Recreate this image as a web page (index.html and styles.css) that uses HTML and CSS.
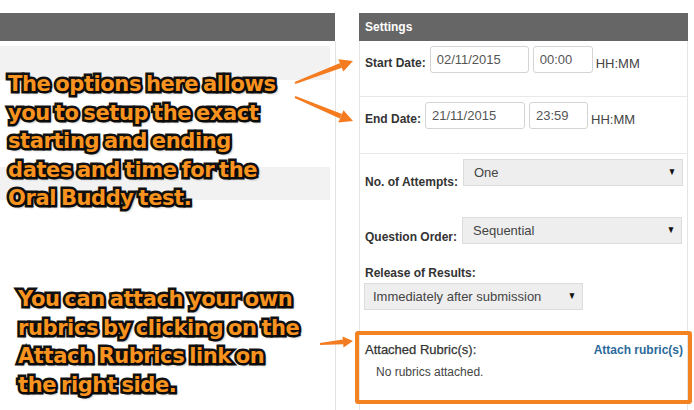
FILE: index.html
```html
<!DOCTYPE html>
<html>
<head>
<meta charset="utf-8">
<link rel="stylesheet" href="styles.css">
</head>
<body>
<div class="page">
  <div class="left">
    <div class="left-head"></div>
    <div class="left-body">
      <div class="band band-a"></div>
      <div class="band band-b"></div>
    </div>
  </div>
  <div class="right">
    <div class="head">Settings</div>
    <div class="row row-start">
      <span class="lbl">Start Date:</span>
      <span class="inp date">02/11/2015</span>
      <span class="inp time">00:00</span>
      <span class="unit">HH:MM</span>
    </div>
    <div class="row row-end">
      <span class="lbl">End Date:</span>
      <span class="inp date">21/11/2015</span>
      <span class="inp time">23:59</span>
      <span class="unit">HH:MM</span>
    </div>
    <div class="opts">
      <div class="opt opt-attempts">
        <span class="lbl">No. of Attempts:</span>
        <span class="sel wide">One<i class="caret">&#9660;</i></span>
      </div>
      <div class="opt opt-order">
        <span class="lbl">Question Order:</span>
        <span class="sel wide">Sequential<i class="caret">&#9660;</i></span>
      </div>
      <div class="opt-release">
        <div class="lbl">Release of Results:</div>
        <span class="sel release">Immediately after submission<i class="caret">&#9660;</i></span>
      </div>
    </div>
    <div class="rubric">
      <div class="rubric-top">
        <span class="lbl">Attached Rubric(s):</span>
        <a class="attach">Attach rubric(s)</a>
      </div>
      <div class="none">No rubrics attached.</div>
    </div>
  </div>

  <div class="note note-1">The options here allows<br>you to setup the exact<br>starting and ending<br>dates and time for the<br>Oral Buddy test.</div>
  <div class="note note-2">You can attach your own<br>rubrics by clicking on the<br>Attach Rubrics link on<br>the right side.</div>

  <svg class="arrows" width="694" height="410" viewBox="0 0 694 410">
    <g fill="#f47b20">
      <polygon points="295.4,84 294.6,82 340.1,62.9 341.9,67.7"/>
      <polygon points="353,61 343.3,71.4 338.3,59.2"/>
      <polygon points="294.6,98 295.4,96 342,114 339.8,118.6"/>
      <polygon points="353,121 338.3,122.4 343.5,110.2"/>
      <polygon points="320.1,345 319.9,343 342.8,339.6 343.2,344.2"/>
      <polygon points="353,341 343.5,347.4 342.5,336.4"/>
    </g>
  </svg>
</div>
</body>
</html>
```
FILE: styles.css
```css
* { box-sizing: border-box; }
html, body { margin: 0; padding: 0; background: #fff; }
body { font-family: "Liberation Sans", Arial, sans-serif; color: #333; }

.page {
  position: relative;
  width: 694px;
  height: 410px;
  overflow: hidden;
  display: flex;
  align-items: flex-start;
}

/* left column */
.left { width: 336px; padding-top: 13px; flex: none; }
.left-head { height: 28px; background: #666; margin-right: 1px; }
.left-body {
  height: 369px;
  border-right: 1px solid #e3e3e3;
  padding: 5px 5px 0 0;
  display: flex;
  flex-direction: column;
}
.band { background: #f2f2f2; }
.band-a { height: 34px; }
.band-b { height: 33px; margin-top: 87px; }

/* right column */
.right {
  width: 329px;
  margin-left: 23px;
  margin-top: 13px;
  flex: none;
  border-left: 1px solid #e5e5e5;
  border-right: 1px solid #e5e5e5;
  height: 397px;
}
.head {
  height: 28px;
  background: #666;
  color: #fff;
  font-weight: bold;
  font-size: 12px;
  line-height: 28px;
  padding-left: 6px;
  margin: 0 -1px;
}
.lbl { font-weight: bold; font-size: 12px; color: #333; }

.row {
  display: flex;
  align-items: flex-start;
  padding-left: 5px;
  border-bottom: 1px solid #e8e8e8;
}
.row-start { height: 56px; padding-top: 5px; }
.row-end { height: 57px; padding-top: 5px; }
.row .lbl { margin-top: 10px; margin-right: 4px; }
.inp {
  height: 27px;
  border: 1px solid #d4d4d4;
  border-radius: 3px;
  font-size: 13px;
  color: #555;
  padding: 5px 0 0 6px;
  margin-right: 4px;
  background: #fff;
}
.row-start .date { width: 99px; }
.row-end .date { width: 100px; }
.row-start .time { width: 60px; }
.row-end .time { width: 59px; }
.unit { font-size: 13px; color: #444; margin-top: 10px; margin-left: -1px; }

.opts { padding-left: 5px; }
.opt { display: flex; align-items: flex-start; }
.opt .lbl { margin-right: 5px; }
.opt-attempts { padding-top: 5px; }
.opt-attempts .lbl { margin-top: 16px; }
.opt-order { padding-top: 30px; }
.opt-order .lbl { margin-top: 11px; }
.sel {
  position: relative;
  display: block;
  height: 27px;
  background: #eee;
  border: 1px solid #dcdcdc;
  font-size: 13px;
  color: #444;
  padding: 5px 0 0 10px;
}
.sel.wide { width: 220px; }
.opt-order .sel { margin-top: -2px; }
.caret {
  position: absolute;
  right: 5px;
  top: 6px;
  font-style: normal;
  font-size: 10px;
  color: #111;
  transform: scaleX(0.85);
}
.opt-release { padding-top: 21px; }
.opt-release .lbl { height: 16px; line-height: 16px; }
.sel.release { width: 219px; margin-top: 2px; margin-left: -1px; padding-left: 8px; }

.rubric {
  margin: 21px -5px 0 -5px;
  height: 73px;
  border: 4px solid #f58220;
  border-radius: 3px;
  padding: 7px 5px 0 6px;
}
.rubric-top { display: flex; justify-content: space-between; align-items: center; }
.rubric-top .lbl { font-weight: normal; font-size: 13px; color: #333; -webkit-text-stroke: 0.25px #333; }
.attach { color: #2b6a9a; font-weight: bold; font-size: 12px; }
.none { font-size: 12px; color: #444; padding: 8px 0 0 11px; }

/* annotations (callouts over the page) */
.note {
  position: absolute;
  font-family: "DejaVu Sans", "Liberation Sans", sans-serif;
  font-weight: bold;
  font-size: 21px;
  line-height: 28.5px;
  color: #f7931e;
  letter-spacing: -0.4px;
  word-spacing: -2px;
  -webkit-text-stroke: 5px #111;
  paint-order: stroke fill;
  text-shadow: 2px 2px 3px rgba(0,0,0,0.55);
  white-space: nowrap;
}
.note-1 { left: 8px; top: 70px; }
.note-2 { left: 18px; top: 285px; }

.arrows { position: absolute; left: 0; top: 0; pointer-events: none; }
```
